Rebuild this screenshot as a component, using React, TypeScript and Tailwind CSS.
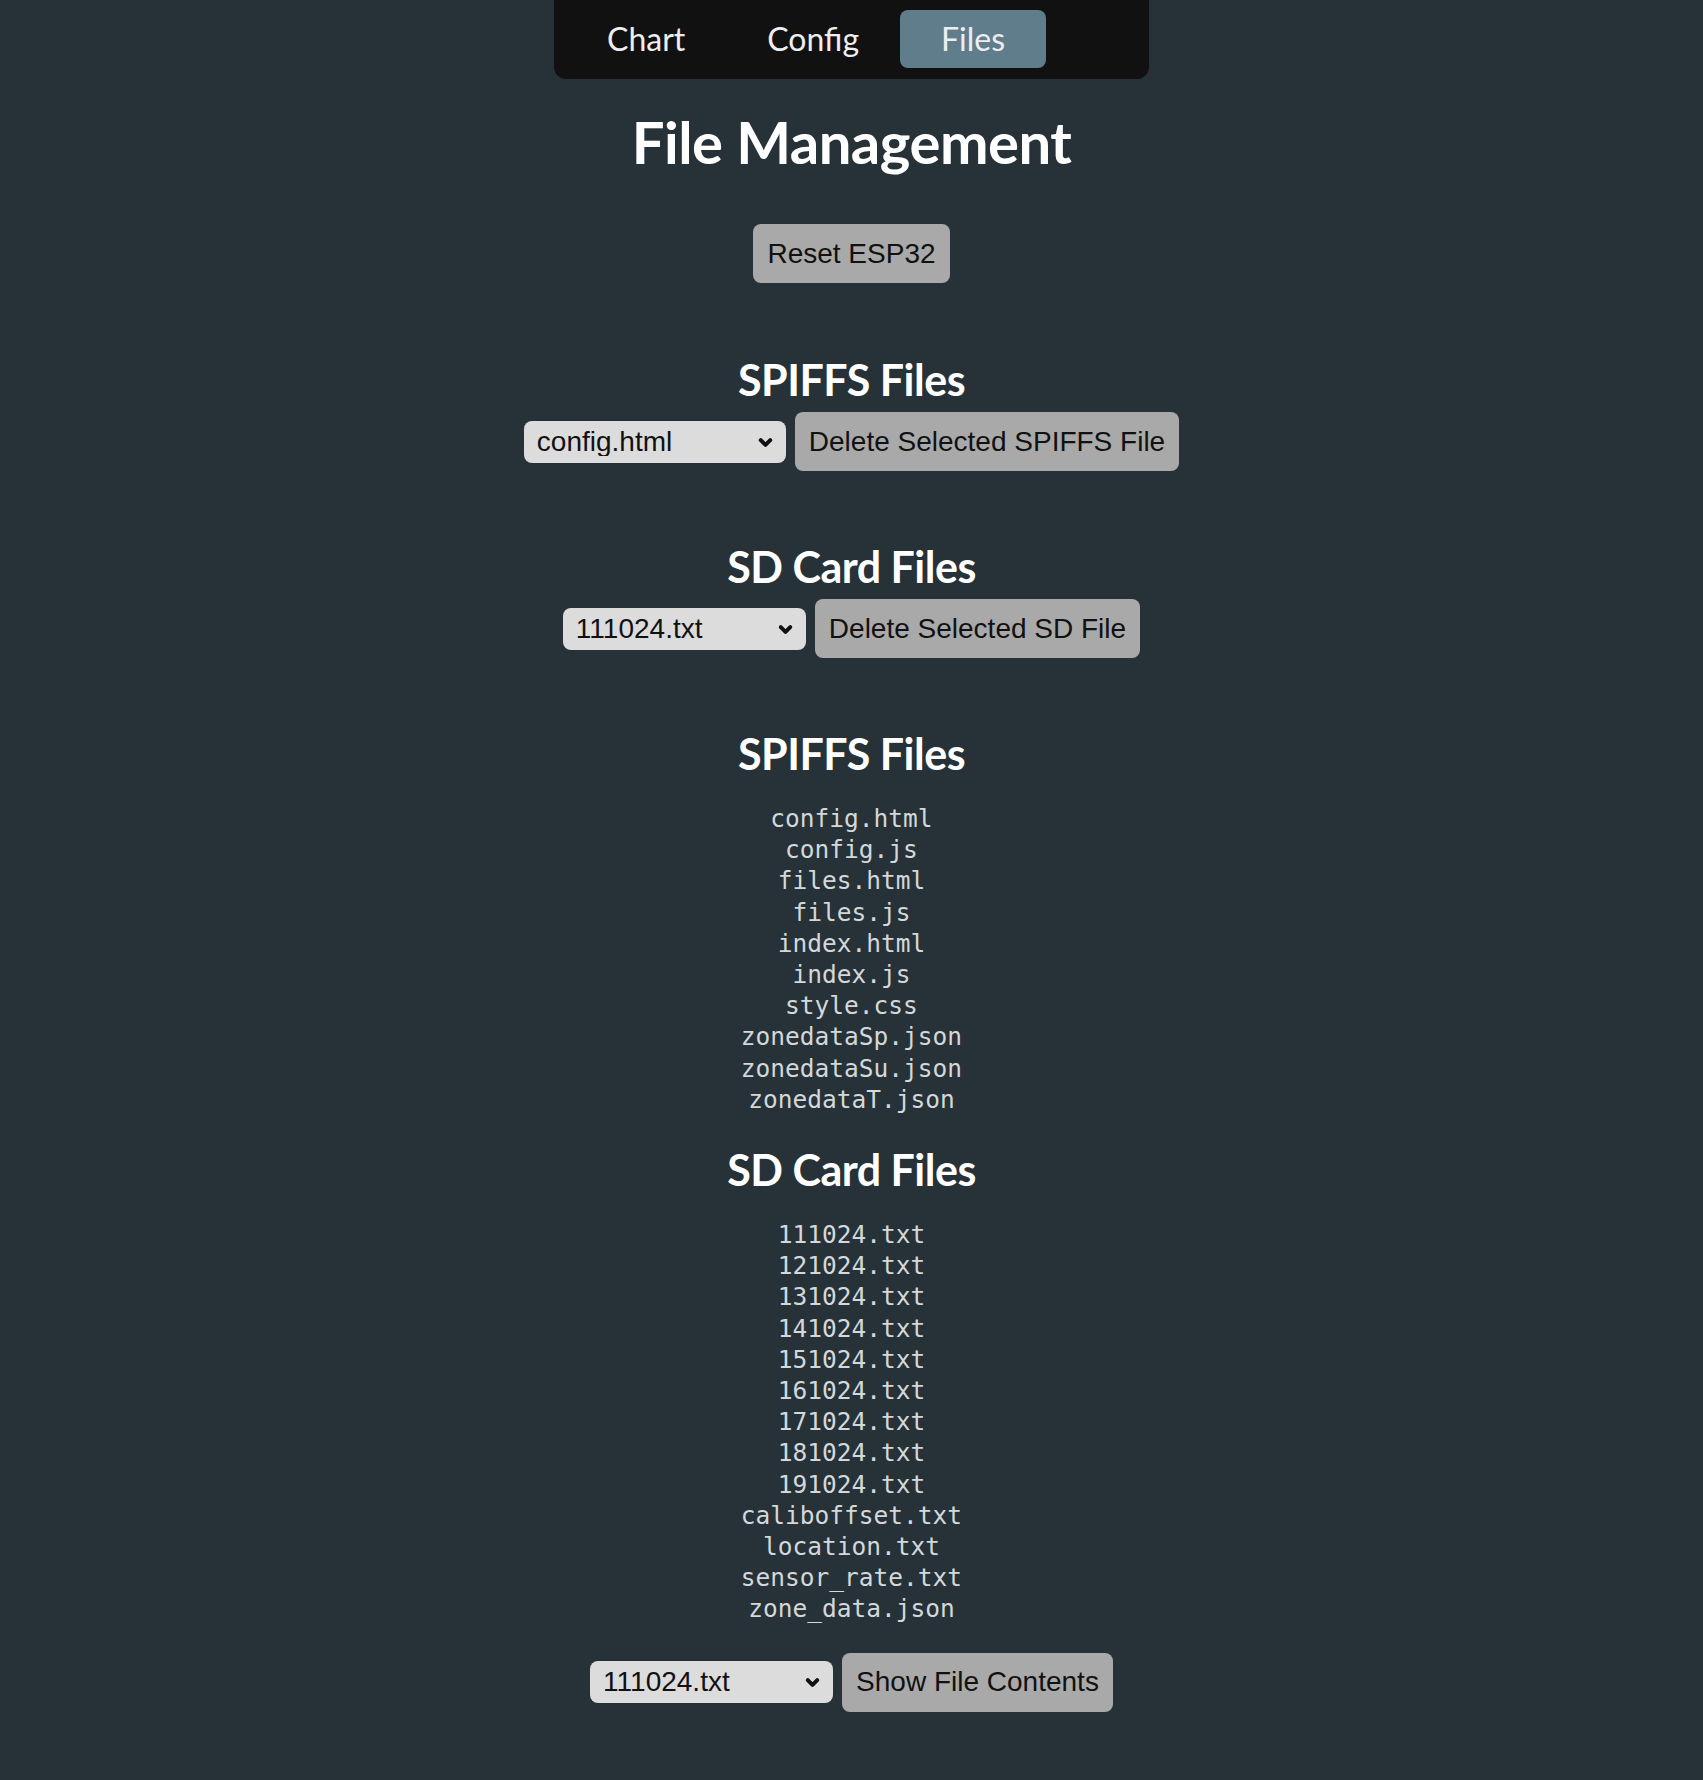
import { ChevronDown } from "lucide-react";

const spiffs = [
  "config.html",
  "config.js",
  "files.html",
  "files.js",
  "index.html",
  "index.js",
  "style.css",
  "zonedataSp.json",
  "zonedataSu.json",
  "zonedataT.json",
];

const sdFiles = [
  "111024.txt",
  "121024.txt",
  "131024.txt",
  "141024.txt",
  "151024.txt",
  "161024.txt",
  "171024.txt",
  "181024.txt",
  "191024.txt",
  "caliboffset.txt",
  "location.txt",
  "sensor_rate.txt",
  "zone_data.json",
];

const heading = "font-['Lato',sans-serif] font-bold text-white tracking-[-0.5px]";
const arial = "font-['Liberation_Sans',Arial,sans-serif]";
const navLink = "font-['Lato',sans-serif] text-[32px] text-[#eeeeee] h-[58px] px-[41px] flex items-center";

function FileSelect({ value, options, width }: { value: string; options: string[]; width: string }) {
  return (
    <div className={`relative h-[42px] ${width}`}>
      <select
        defaultValue={value}
        className={`${arial} appearance-none w-full h-full rounded-[8px] bg-[#dcdcdc] text-[#111] text-[28px] leading-none pl-[13px] pr-[36px] outline-none`}
      >
        {options.map((o) => (
          <option key={o}>{o}</option>
        ))}
      </select>
      <ChevronDown
        size={19}
        strokeWidth={5}
        className="absolute right-[11px] top-[12px] text-[#111] pointer-events-none"
      />
    </div>
  );
}

function GrayButton({ children }: { children: React.ReactNode }) {
  return (
    <button
      className={`${arial} h-[59px] px-[14px] rounded-[8px] bg-[#a9a9a9] text-[#111] text-[28px] leading-none`}
    >
      {children}
    </button>
  );
}

function FileList({ files }: { files: string[] }) {
  return (
    <ul className="font-['DejaVu_Sans_Mono',monospace] text-[24.5px] leading-[31.2px] text-[#d4d8da] text-center">
      {files.map((f) => (
        <li key={f}>{f}</li>
      ))}
    </ul>
  );
}

export default function App() {
  return (
    <div className="min-h-[1780px] bg-[#263238] pb-[68px]">
      <nav className="mx-auto w-[595px] h-[79px] bg-[#111111] rounded-b-[12px] flex items-start pt-[10px] pl-[12px]">
        <a className={navLink}>Chart</a>
        <a className={navLink}>Config</a>
        <a className={`${navLink} bg-[#607d8b] rounded-[8px]`}>Files</a>
      </nav>

      <main className="flex flex-col items-center">
        <h1 className={`${heading} text-[58px] leading-[64px] mt-[31px]`}>File Management</h1>

        <div className="mt-[50px]">
          <GrayButton>Reset ESP32</GrayButton>
        </div>

        <h2 className={`${heading} text-[43px] leading-[50px] mt-[72px]`}>SPIFFS Files</h2>
        <div className="flex items-center gap-[9px] mt-[7px]">
          <FileSelect value="config.html" options={spiffs} width="w-[262px]" />
          <GrayButton>Delete Selected SPIFFS File</GrayButton>
        </div>

        <h2 className={`${heading} text-[43px] leading-[50px] mt-[71px]`}>SD Card Files</h2>
        <div className="flex items-center gap-[9px] mt-[7px]">
          <FileSelect value="111024.txt" options={sdFiles} width="w-[243px]" />
          <GrayButton>Delete Selected SD File</GrayButton>
        </div>

        <h2 className={`${heading} text-[43px] leading-[50px] mt-[71px]`}>SPIFFS Files</h2>
        <div className="mt-[24px]">
          <FileList files={spiffs} />
        </div>

        <h2 className={`${heading} text-[43px] leading-[50px] mt-[30px]`}>SD Card Files</h2>
        <div className="mt-[24px]">
          <FileList files={sdFiles} />
        </div>

        <div className="flex items-center gap-[9px] mt-[28px]">
          <FileSelect value="111024.txt" options={sdFiles} width="w-[243px]" />
          <GrayButton>Show File Contents</GrayButton>
        </div>
      </main>
    </div>
  );
}
